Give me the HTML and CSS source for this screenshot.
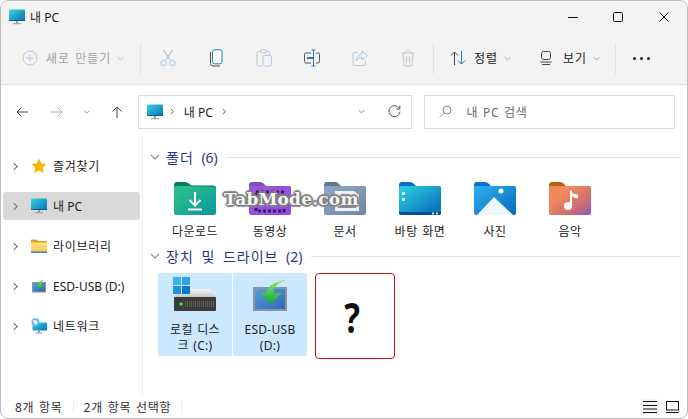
FILE: index.html
```html
<!DOCTYPE html>
<html lang="ko">
<head>
<meta charset="utf-8">
<title>내 PC</title>
<link rel="stylesheet" href="styles.css">
</head>
<body>
<svg class="defs" width="0" height="0" aria-hidden="true">
  <defs>
    <linearGradient id="gPc" x1="0" y1="0" x2="1" y2="1"><stop offset="0" stop-color="#35d6e0"/><stop offset="1" stop-color="#0a6fb8"/></linearGradient>
    <linearGradient id="gDl" x1="0" y1="0" x2="1" y2="1"><stop offset="0" stop-color="#2dc58a"/><stop offset="1" stop-color="#0b97a0"/></linearGradient>
    <linearGradient id="gVid" x1="0" y1="0" x2="1" y2="1"><stop offset="0" stop-color="#9b59d8"/><stop offset="1" stop-color="#9146ee"/></linearGradient>
    <linearGradient id="gDoc" x1="0" y1="0" x2="1" y2="1"><stop offset="0" stop-color="#8fa8c6"/><stop offset="1" stop-color="#7088a8"/></linearGradient>
    <linearGradient id="gDesk" x1="0" y1="0" x2="1" y2="1"><stop offset="0" stop-color="#2cd3e2"/><stop offset="1" stop-color="#0864b6"/></linearGradient>
    <linearGradient id="gPic" x1="0" y1="0" x2="1" y2="1"><stop offset="0" stop-color="#2db2ee"/><stop offset="1" stop-color="#0a68bc"/></linearGradient>
    <linearGradient id="gMus" x1="0" y1="0" x2="1" y2="1"><stop offset="0.3" stop-color="#f0895a"/><stop offset="0.75" stop-color="#c56a78"/><stop offset="1" stop-color="#8a58c8"/></linearGradient>
    <linearGradient id="gLib" x1="0" y1="0" x2="0" y2="1"><stop offset="0" stop-color="#ffe28a"/><stop offset="1" stop-color="#f8c84a"/></linearGradient>
    <linearGradient id="gUsb" x1="0" y1="0" x2="1" y2="1"><stop offset="0" stop-color="#5aa0e0"/><stop offset="1" stop-color="#2c66b0"/></linearGradient>
    <linearGradient id="gArrow" x1="0" y1="0" x2="0" y2="1"><stop offset="0" stop-color="#8ee86a"/><stop offset="1" stop-color="#12a83a"/></linearGradient>
    <linearGradient id="gHdd" x1="0" y1="0" x2="0" y2="1"><stop offset="0" stop-color="#f4f4f4"/><stop offset="1" stop-color="#c4c4c4"/></linearGradient>
    <symbol id="pc" viewBox="0 0 16 16">
      <rect x="0" y="0.5" width="16" height="11.5" rx="1" fill="url(#gPc)"/>
      <rect x="0" y="11" width="16" height="1" fill="#0a5a94"/>
      <rect x="7" y="12" width="2" height="2.5" fill="#8a9aa6"/>
      <rect x="4" y="14.2" width="8" height="1" fill="#8a9aa6"/>
    </symbol>
    <symbol id="chev-r" viewBox="0 0 6 10"><path d="M1 1l4 4-4 4" fill="none" stroke="currentColor" stroke-width="1.4"/></symbol>
    <symbol id="chev-d" viewBox="0 0 10 6"><path d="M1 1l4 4 4-4" fill="none" stroke="currentColor" stroke-width="1.1"/></symbol>
  </defs>
</svg>
<div class="window">
  <header class="titlebar">
    <svg class="ico16" aria-hidden="true"><use href="#pc"/></svg>
    <span class="title">내 PC</span>
    <div class="winctl">
      <svg width="12" height="12" viewBox="0 0 12 12"><path d="M2 6.500h10" stroke="#111" stroke-width="1"/></svg>
      <svg width="12" height="12" viewBox="0 0 12 12"><rect x="1.500" y="1.500" width="9" height="9" rx="1.200" fill="none" stroke="#111"/></svg>
      <svg width="12" height="12" viewBox="0 0 12 12"><path d="M1.500 1.500l9 9M10.500 1.500l-9 9" stroke="#111" stroke-width="1"/></svg>
    </div>
  </header>

  <div class="toolbar">
    <div class="tb-new">
      <svg width="16" height="16" viewBox="0 0 16 16"><circle cx="8" cy="8" r="7" fill="none" stroke="#c4c4c4"/><path d="M8 4.500v7M4.500 8h7" stroke="#a8c8e8"/></svg>
      <span class="tb-label muted wide">새로 만들기</span>
      <svg class="chev" viewBox="0 0 10 6"><use href="#chev-d"/></svg>
    </div>
    <i class="sep"></i>
    <div class="tb-icons">
      <span class="tb-cell"><svg width="16" height="18" viewBox="0 0 16 18"><path d="M3.500 1l6.500 10M12.500 1L6 11" stroke="#b4b4b4" fill="none"/><circle cx="3.500" cy="14" r="2.700" fill="none" stroke="#a8c8e8"/><circle cx="12.500" cy="14" r="2.700" fill="none" stroke="#a8c8e8"/></svg></span>
      <span class="tb-cell"><svg width="14" height="18" viewBox="0 0 14 18"><path d="M1.500 3v11.500a2.500 2.500 0 0 0 2.500 2.500h7" fill="none" stroke="#555"/><rect x="3.500" y="0.800" width="9.500" height="14" rx="2" fill="#fff" stroke="#1a78d0"/></svg></span>
      <span class="tb-cell"><svg width="16" height="18" viewBox="0 0 16 18"><path d="M5 2.500H2.500a1.500 1.500 0 0 0-1.500 1.500v11.500a1.500 1.500 0 0 0 1.500 1.500H6M10 2.500h2.500A1.500 1.500 0 0 1 14 4v2" fill="none" stroke="#c4c4c4"/><rect x="4.500" y="0.800" width="6" height="3" rx="1" fill="none" stroke="#c4c4c4"/><rect x="7" y="6.500" width="8.500" height="10.500" rx="1.500" fill="none" stroke="#a8c8e8"/></svg></span>
      <span class="tb-cell"><svg width="16" height="18" viewBox="0 0 16 18"><path d="M7 4H2a1.500 1.500 0 0 0-1.500 1.500v7A1.500 1.500 0 0 0 2 14h5M12 4h2a1.500 1.500 0 0 1 1.500 1.500v7A1.500 1.500 0 0 1 14 14h-2" fill="none" stroke="#555"/><path d="M9.500 1v16M7.500 1h4M7.500 17h4" stroke="#1a78d0" fill="none"/><rect x="3" y="8" width="6" height="2" fill="#1a78d0"/></svg></span>
      <span class="tb-cell"><svg width="16" height="18" viewBox="0 0 16 18"><path d="M6 3.500H2.500A1.500 1.500 0 0 0 1 5v10a1.500 1.500 0 0 0 1.500 1.500h9.500a1.500 1.500 0 0 0 1.500-1.500v-3" fill="none" stroke="#c4c4c4"/><path d="M10 2l5.500 4.500L10 11V8.500c-3 0-4.500 1-5.500 3.500 0-4 2-6.500 5.500-7z" fill="none" stroke="#a8c8e8"/></svg></span>
      <span class="tb-cell"><svg width="14" height="18" viewBox="0 0 14 18"><path d="M0.500 4h13M5 4V2.500A1.500 1.500 0 0 1 6.500 1h1A1.500 1.500 0 0 1 9 2.500V4M2 4l1 11.500A1.500 1.500 0 0 0 4.500 17h5a1.500 1.500 0 0 0 1.500-1.500L12 4M5.500 7.500v6M8.500 7.500v6" fill="none" stroke="#c4c4c4"/></svg></span>
    </div>
    <i class="sep"></i>
    <div class="tb-sort">
      <svg width="16" height="14" viewBox="0 0 16 14"><path d="M4.500 14V1M1 4.500L4.500 1 8 4.500" fill="none" stroke="#444"/><path d="M11.500 0v13M8 9.500l3.500 3.500 3.500-3.500" fill="none" stroke="#1a78d0"/></svg>
      <span class="tb-label wide">정렬</span>
      <svg class="chev" viewBox="0 0 10 6"><use href="#chev-d"/></svg>
    </div>
    <div class="tb-view">
      <svg width="12" height="14" viewBox="0 0 12 14"><rect x="1.500" y="0.500" width="9" height="8" rx="2" fill="none" stroke="#444"/><path d="M0.500 11h11M2 13.500h8" stroke="#444"/></svg>
      <span class="tb-label wide">보기</span>
      <svg class="chev" viewBox="0 0 10 6"><use href="#chev-d"/></svg>
    </div>
    <i class="sep sep-view"></i>
    <div class="dots"><i></i><i></i><i></i></div>
  </div>

  <nav class="navrow">
    <div class="navbtns">
      <svg width="12" height="12" viewBox="0 0 12 12"><path d="M12 6H1M5.500 1.500L1 6l4.500 4.500" fill="none" stroke="#444"/></svg>
      <svg width="12" height="12" viewBox="0 0 12 12"><path d="M0 6h11M6.500 1.500L11 6l-4.500 4.500" fill="none" stroke="#a8a8a8"/></svg>
      <svg class="nav-chev" viewBox="0 0 10 6"><use href="#chev-d"/></svg>
      <svg width="12" height="12" viewBox="0 0 12 12"><path d="M6 12V1M1.500 5.500L6 1l4.500 4.500" fill="none" stroke="#444"/></svg>
    </div>
    <div class="address">
      <svg class="ico16" aria-hidden="true"><use href="#pc"/></svg>
      <svg class="crumb" viewBox="0 0 6 10"><use href="#chev-r"/></svg>
      <span>내 PC</span>
      <svg class="crumb" viewBox="0 0 6 10"><use href="#chev-r"/></svg>
      <svg class="addr-drop" viewBox="0 0 10 6"><use href="#chev-d"/></svg>
      <svg class="addr-refresh" width="13" height="13" viewBox="0 0 13 13"><path d="M11.300 3.500A5.500 5.500 0 1 0 12 6.500" fill="none" stroke="#555"/><path d="M11.800 0.500v3.500H8.300" fill="none" stroke="#555"/></svg>
    </div>
    <div class="search">
      <svg width="13" height="13" viewBox="0 0 13 13"><circle cx="8" cy="5" r="4" fill="none" stroke="#888"/><path d="M5 8l-4.500 4.500" stroke="#d89878"/></svg>
      <span class="ko">내 PC 검색</span>
    </div>
  </nav>

  <div class="main">
    <aside class="sidebar">
      <div class="side-item">
        <svg class="side-chev" viewBox="0 0 6 10"><use href="#chev-r"/></svg>
        <svg class="ico16" viewBox="0 0 16 16"><path d="M8 0.500l2.300 4.900 5.200 0.700-3.800 3.700 1 5.300L8 12.500l-4.700 2.600 1-5.300L0.500 6.100l5.200-0.700z" fill="#fbb800"/></svg>
        <span class="ko">즐겨찾기</span>
      </div>
      <div class="side-item selected">
        <svg class="side-chev" viewBox="0 0 6 10"><use href="#chev-r"/></svg>
        <svg class="ico16" aria-hidden="true"><use href="#pc"/></svg>
        <span>내 PC</span>
      </div>
      <div class="side-item">
        <svg class="side-chev" viewBox="0 0 6 10"><use href="#chev-r"/></svg>
        <svg class="ico16" viewBox="0 0 16 16"><path d="M0 2.500A1 1 0 0 1 1 1.500h4.500l1.500 1.500h8a1 1 0 0 1 1 1V6H0z" fill="#e8a010"/><rect x="0" y="4.500" width="16" height="9.500" rx="1" fill="url(#gLib)"/><rect x="0" y="13.500" width="16" height="1.500" fill="#2a88c8"/></svg>
        <span class="ko">라이브러리</span>
      </div>
      <div class="side-item">
        <svg class="side-chev" viewBox="0 0 6 10"><use href="#chev-r"/></svg>
        <svg class="ico16" viewBox="0 0 16 16"><rect x="1.500" y="4.500" width="13" height="9.500" fill="url(#gUsb)" stroke="#8a94a4"/><path d="M13 1.500C10 2 7.500 3.500 7 7H4.500l4 4.500 4-4.500H10c0-2.500 1-4 3-5.500z" fill="url(#gArrow)"/></svg>
        <span>ESD-USB (D:)</span>
      </div>
      <div class="side-item">
        <svg class="side-chev" viewBox="0 0 6 10"><use href="#chev-r"/></svg>
        <svg class="ico16" viewBox="0 0 16 16"><rect x="1.500" y="4.500" width="14.500" height="8" rx="0.500" fill="url(#gPc)"/><rect x="7" y="12.500" width="2" height="2" fill="#8a9aa6"/><rect x="4.500" y="14.500" width="7" height="1" fill="#8a9aa6"/><circle cx="4.500" cy="4" r="4" fill="#7ab8e8"/><path d="M2 2.500c2-1 3 0 4 1s-1 3-2 3.500" fill="#e8f4ff"/></svg>
        <span class="ko">네트워크</span>
      </div>
    </aside>

    <section class="content">
      <div class="group-head">
        <svg class="group-chev" viewBox="0 0 10 6"><use href="#chev-d"/></svg>
        <h2>폴더 <span class="count">(6)</span></h2>
        <i class="rule"></i>
      </div>
      <div class="folders">
        <div class="folder">
          <svg class="folder-ico" viewBox="0 0 42 33"><path d="M0 3a3 3 0 0 1 3-3h8c2 0 3 1 4 2l2 2h22a3 3 0 0 1 3 3v4H0z" fill="#0c7a5e"/><rect y="4" width="42" height="29" rx="2" fill="url(#gDl)"/><path d="M15 1.500l2 2.500H39c2 0 3 1 3 2" fill="none" stroke="#0c7a5e"/><path d="M21 10v13M15.500 18l5.500 5.500 5.500-5.500M14 27.500h14" fill="none" stroke="#fff" stroke-width="2"/></svg>
          <span>다운로드</span>
        </div>
        <div class="folder">
          <svg class="folder-ico" viewBox="0 0 42 33"><path d="M0 3a3 3 0 0 1 3-3h8c2 0 3 1 4 2l2 2h22a3 3 0 0 1 3 3v4H0z" fill="#7a50b4"/><rect y="4" width="42" height="29" rx="2" fill="url(#gVid)"/><path d="M7 10h28v19H7z" fill="none" stroke="#3a2050" stroke-width="3" stroke-dasharray="3 2"/><path d="M18 14l8 5-8 5z" fill="#d8c8f0"/></svg>
          <span>동영상</span>
        </div>
        <div class="folder">
          <svg class="folder-ico" viewBox="0 0 42 33"><path d="M0 3a3 3 0 0 1 3-3h8c2 0 3 1 4 2l2 2h22a3 3 0 0 1 3 3v4H0z" fill="#5e7888"/><rect y="4" width="42" height="29" rx="2" fill="url(#gDoc)"/><path d="M11 9h19l5 4v16H11z" fill="#eef2f8"/><path d="M14 18h18M14 21.500h18M14 25h18" stroke="#5e7080" stroke-width="1.500"/></svg>
          <span>문서</span>
        </div>
        <div class="folder">
          <svg class="folder-ico" viewBox="0 0 42 33"><path d="M0 3a3 3 0 0 1 3-3h8c2 0 3 1 4 2l2 2h22a3 3 0 0 1 3 3v4H0z" fill="#0a6cc8"/><rect y="4" width="42" height="29" rx="2" fill="url(#gDesk)"/><rect x="3" y="10" width="3" height="3" fill="#d8f6fa"/><rect x="3" y="16" width="3" height="3" fill="#d8f6fa"/><path d="M0 30h42v1a2 2 0 0 1-2 2H2a2 2 0 0 1-2-2z" fill="#0c4e8a"/><rect x="33" y="30.500" width="2" height="2" fill="#bcd8ee"/><rect x="37" y="30.500" width="2" height="2" fill="#bcd8ee"/></svg>
          <span>바탕 화면</span>
        </div>
        <div class="folder">
          <svg class="folder-ico" viewBox="0 0 42 33"><path d="M0 3a3 3 0 0 1 3-3h8c2 0 3 1 4 2l2 2h22a3 3 0 0 1 3 3v4H0z" fill="#0a72cc"/><rect y="4" width="42" height="29" rx="2" fill="url(#gPic)"/><path d="M3 33L20 15l19 18z" fill="#eef6fc"/><circle cx="27" cy="9" r="2.500" fill="#f4fbff"/></svg>
          <span>사진</span>
        </div>
        <div class="folder">
          <svg class="folder-ico" viewBox="0 0 42 33"><path d="M0 3a3 3 0 0 1 3-3h8c2 0 3 1 4 2l2 2h22a3 3 0 0 1 3 3v4H0z" fill="#b8640c"/><rect y="4" width="42" height="29" rx="2" fill="url(#gMus)"/><circle cx="19" cy="24" r="4" fill="#fff"/><path d="M22 24V8.500" stroke="#fff" stroke-width="2"/><path d="M22 8c0 3 3 4 7 4.500v4C25 16 22 14 22 12z" fill="#fff"/></svg>
          <span>음악</span>
        </div>
      </div>

      <div class="group-head">
        <svg class="group-chev" viewBox="0 0 10 6"><use href="#chev-d"/></svg>
        <h2>장치 및 드라이브 <span class="count">(2)</span></h2>
        <i class="rule"></i>
      </div>
      <div class="drives">
        <div class="drive">
          <svg class="drive-ico" viewBox="0 0 44 36"><path d="M7 13h30l7 8.500H1z" fill="url(#gHdd)"/><rect x="1" y="21" width="42" height="14" rx="1" fill="#3c3c3c"/><path d="M12 28h29" stroke="#5c5c5c" stroke-dasharray="1 1" stroke-width="6"/><circle cx="8" cy="28" r="1.800" fill="#3ae050"/><rect x="0" y="1" width="8" height="8" fill="#3ab4f0"/><rect x="9" y="1" width="8" height="8" fill="#2aa4e8"/><rect x="0" y="10" width="8" height="8" fill="#1a94e0"/><rect x="9" y="10" width="8" height="8" fill="#0c78cc"/></svg>
          <span>로컬 디스크 (C:)</span>
        </div>
        <div class="drive">
          <svg class="drive-ico" viewBox="0 0 44 36"><rect x="6" y="12" width="32" height="22" fill="url(#gUsb)" stroke="#8a94a4" stroke-width="2"/><path d="M38 4C30 5 19 9 18 17H12L23 28 34 17H25C25 12 30 7 38 4z" fill="url(#gArrow)"/></svg>
          <span>ESD-USB (D:)</span>
        </div>
        <div class="unknown"><span class="qmark">?</span></div>
      </div>
      <div class="watermark">TabMode.com</div>
    </section>
  </div>

  <footer class="status">
    <span class="ko">8개 항목</span>
    <i class="status-sep"></i>
    <span class="ko">2개 항목 선택함</span>
    <i class="status-sep"></i>
    <div class="viewmodes">
      <span class="vm vm-on"><svg width="14" height="12" viewBox="0 0 14 12"><path d="M0 0.500h14M0 4.500h14M0 8h14M0 11.500h14" stroke="#111"/></svg></span>
      <span class="vm"><svg width="13" height="12" viewBox="0 0 13 12"><rect x="0.500" y="0.500" width="12" height="8.500" fill="none" stroke="#111"/><path d="M0 11.500h13" stroke="#111"/></svg></span>
    </div>
  </footer>
</div>
</body>
</html>
```

FILE: styles.css
```css
* { box-sizing: border-box; }
html, body { margin: 0; padding: 0; background: #fff; }
body { font-family: "Noto Sans", "Noto Sans CJK KR", sans-serif; font-size: 12px; color: #1a1a1a; }
.defs { position: absolute; }
svg { display: block; flex: none; }
i { display: block; }

.ko { letter-spacing: 0.7px; word-spacing: 1px; }
.wide { letter-spacing: 1px; word-spacing: 1px; }

.window { width: 688px; height: 419px; border: 1px solid #bcbcbc; border-radius: 8px; overflow: hidden; display: flex; flex-direction: column; background: #fff; }

.ico16 { width: 16px; height: 16px; }

.titlebar { height: 31px; display: flex; align-items: center; background: #f3f3f3; padding-left: 8px; }
.title { margin-left: 5px; }
.winctl { margin-left: auto; display: flex; gap: 34px; padding-right: 17px; }

.toolbar { height: 53px; flex: none; display: flex; align-items: center; background: #f3f3f3; border-bottom: 1px solid #e0e0e0; padding: 0 0 0 21px; }
.tb-new { display: flex; align-items: center; width: 104px; }
.tb-label { margin-left: 8px; white-space: nowrap; }
.muted { color: #a4a4a4; }
.chev { width: 7px; height: 5px; margin-left: 6px; color: #888; }
.tb-new .chev { color: #aaa; }
.sep { width: 1px; height: 31px; background: #e2e2e2; flex: none; }
.tb-new + .sep { margin-left: 14px; }
.tb-icons { display: flex; align-items: center; width: 292px; padding-left: 3px; }
.tb-cell { width: 48px; display: flex; justify-content: center; }
.tb-sort { display: flex; align-items: center; margin-left: 16px; width: 90px; }
.tb-view { display: flex; align-items: center; width: 64px; }
.tb-view .tb-label { margin-left: 11px; }
.sep-view { margin-left: 11px; }
.dots { display: flex; gap: 4px; margin-left: 17px; }
.dots i { width: 3px; height: 3px; border-radius: 50%; background: #222; }

.navrow { display: flex; align-items: center; height: 50px; flex: none; padding: 3px 12px 0 15px; }
.navbtns { display: flex; align-items: center; width: 122px; gap: 23px; }
.nav-chev { width: 6px; height: 4px; color: #555; margin-left: -2px; margin-right: -2px; }
.address { width: 275px; height: 34px; border: 1px solid #dcdcdc; display: flex; align-items: center; padding: 0 10px 0 8px; }
.crumb { width: 4px; height: 7px; color: #555; margin: 0 10px 0 7px; }
.address span + .crumb { margin-left: 9px; }
.addr-drop { width: 7px; height: 5px; color: #666; margin-left: auto; }
.addr-refresh { margin-left: 23px; }
.search { width: 251px; height: 34px; margin-left: 12px; border: 1px solid #dcdcdc; display: flex; align-items: center; padding-left: 14px; color: #6a6a6a; }
.search span { margin-left: 14px; }

.main { flex: 1; display: flex; min-height: 0; }
.sidebar { width: 142px; flex: none; border-right: 1px solid #ececec; padding: 17px 2px 0 2px; display: flex; flex-direction: column; gap: 12px; }
.side-item { height: 28px; display: flex; align-items: center; padding-left: 10px; border-radius: 3px; white-space: nowrap; }
.side-item.selected { background: #d9d9d9; }
.side-chev { width: 5px; height: 9px; color: #777; margin-right: 13px; }
.side-item span { margin-left: 6px; }

.content { flex: 1; position: relative; padding: 13px 7px 0 7px; min-width: 0; }
.group-head { display: flex; align-items: center; height: 18px; }
.group-chev { width: 10px; height: 6px; color: #8a8a8a; }
.group-head h2 { margin: 0 0 0 6px; font-size: 14px; font-weight: 400; color: #1c3a8a; white-space: nowrap; letter-spacing: 1px; word-spacing: 3px; }
.count { letter-spacing: 0; }
.rule { flex: 1; height: 1px; background: #e4e4e4; margin-left: 8px; }

.folders { display: flex; gap: 1px; margin: 16px 0 6px 8px; }
.folder { width: 74px; display: flex; flex-direction: column; align-items: center; }
.folder-ico { width: 42px; height: 33px; }
.folder span { margin-top: 8px; line-height: 18px; white-space: nowrap; letter-spacing: 0.5px; word-spacing: 1px; }

.drives { display: flex; align-items: flex-start; gap: 1px; margin: 8px 0 0 8px; }
.drive { width: 74px; height: 83px; background: #cce8ff; border-radius: 2px; display: flex; flex-direction: column; align-items: center; padding-top: 3px; text-align: center; }
.drive-ico { width: 44px; height: 36px; }
.drive span { width: 58px; margin-top: 10px; line-height: 16px; letter-spacing: 0.3px; word-spacing: 1px; }
.unknown { width: 80px; height: 86px; margin-left: 7px; border: 1px solid #cc1111; border-radius: 4px; background: #fff; display: flex; align-items: center; justify-content: center; padding-right: 6px; font-family: "Noto Sans", sans-serif; font-weight: 700; font-size: 42px; color: #111; }
.qmark { display: block; transform: scaleX(0.78); }

.watermark { position: absolute; left: 81px; top: 54px; font-family: "DejaVu Serif", serif; font-weight: 700; font-size: 17px; letter-spacing: 0.2px; color: #f6f6f6; white-space: nowrap; text-shadow: 0 0 3px #777, 1px 1px 1px #808080, -1px -1px 1px #808080, 1px -1px 1px #808080, -1px 1px 1px #808080, 2px 0 1px #8c8c8c, -2px 0 1px #8c8c8c, 0 2px 1px #8c8c8c, 0 -2px 1px #8c8c8c; }

.status { height: 23px; flex: none; display: flex; align-items: center; padding: 0 8px 0 14px; color: #333; }
.status-sep { width: 1px; height: 14px; background: #ececec; margin: 0 10px; }
.viewmodes { margin-left: auto; display: flex; gap: 9px; }
.vm { display: block; }
.vm-on { background: #f6f6f6; box-shadow: 0 0 0 2px #f6f6f6; }
```
